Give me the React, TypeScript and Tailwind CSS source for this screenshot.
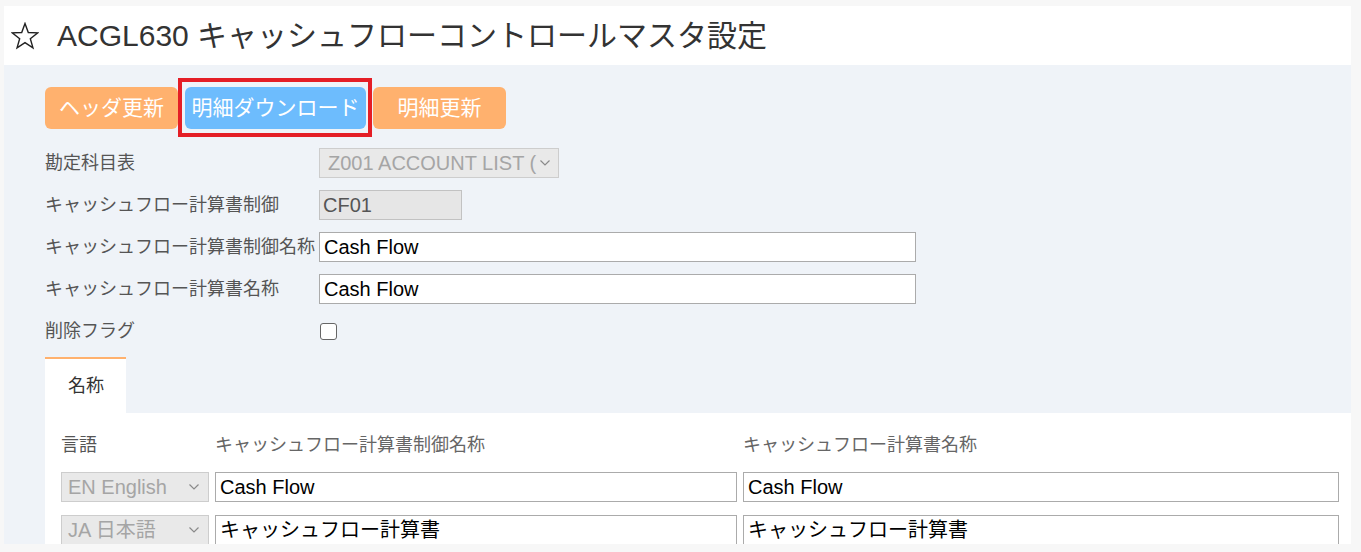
import React from "react";

const font = { fontFamily: '"Liberation Sans", "Noto Sans CJK JP", sans-serif' };

function Chevron() {
  return (
    <svg width="12" height="8" viewBox="0 0 12 8" className="shrink-0">
      <polyline points="1.5,1.5 6,6 10.5,1.5" fill="none" stroke="#8a8a8a" strokeWidth="1.2" />
    </svg>
  );
}

function Star() {
  const pts: string[] = [];
  for (let i = 0; i < 10; i++) {
    const r = i % 2 === 0 ? 13.5 : 5.6;
    const a = -Math.PI / 2 + (i * Math.PI) / 5;
    pts.push(`${(14 + r * Math.cos(a)).toFixed(2)},${(15 + r * Math.sin(a)).toFixed(2)}`);
  }
  return (
    <svg width="28" height="28" viewBox="0 0 28 28">
      <polygon points={pts.join(" ")} fill="none" stroke="#222" strokeWidth="1.4" strokeLinejoin="miter" />
    </svg>
  );
}

function Row({ label, children }: { label: string; children: React.ReactNode }) {
  return (
    <div className="flex h-[42px] items-center">
      <div className="w-[274px] shrink-0 text-[18px] text-[#555] leading-none">{label}</div>
      {children}
    </div>
  );
}

export default function App() {
  return (
    <div className="min-h-[552px] w-[1361px] bg-[#f7f7f7] pt-[6px] pl-[4px]" style={font}>
      <div className="h-[538px] w-[1347px] overflow-hidden">
        <div className="flex h-[59px] items-center bg-white pl-[7px]">
          <Star />
          <div className="ml-[18px] text-[30px] leading-none text-[#333]">
            ACGL630 キャッシュフローコントロールマスタ設定
          </div>
        </div>
        <div className="bg-[#eff3f8] pl-[41px] pt-[22px] h-[479px]">
          <div className="flex gap-[7px] h-[42px]">
            <div className="flex w-[133px] items-center justify-center rounded-[6px] bg-[#ffb16e] text-[21px] text-white">
              ヘッダ更新
            </div>
            <div className="relative w-[181px]">
              <div className="flex h-full items-center justify-center rounded-[6px] bg-[#6dbcfd] text-[21px] text-white">
                明細ダウンロード
              </div>
              <div className="absolute -left-[7px] -right-[6px] -top-[9px] -bottom-[8px] border-[4px] border-[#e41e26]" />
            </div>
            <div className="flex w-[133px] items-center justify-center rounded-[6px] bg-[#ffb16e] text-[21px] text-white">
              明細更新
            </div>
          </div>
          <div className="mt-[13px]">
            <Row label="勘定科目表">
              <div className="flex h-[30px] w-[240px] items-center justify-between overflow-hidden border border-[#cdcdcd] bg-[#e9e9e9] pl-[8px] pr-[7px]">
                <span className="whitespace-nowrap text-[20px] text-[#a5a5a5]">Z001 ACCOUNT LIST (</span>
                <Chevron />
              </div>
            </Row>
            <Row label="キャッシュフロー計算書制御">
              <div className="flex h-[30px] w-[143px] items-center border border-[#c2c2c2] bg-[#e6e6e6] pl-[3px] text-[20px] text-[#555]">
                CF01
              </div>
            </Row>
            <Row label="キャッシュフロー計算書制御名称">
              <div className="flex h-[30px] w-[597px] items-center border border-[#ababab] bg-white pl-[4px] text-[20px] text-black">
                Cash Flow
              </div>
            </Row>
            <Row label="キャッシュフロー計算書名称">
              <div className="flex h-[30px] w-[597px] items-center border border-[#ababab] bg-white pl-[4px] text-[20px] text-black">
                Cash Flow
              </div>
            </Row>
            <Row label="削除フラグ">
              <div className="ml-[1px] h-[17px] w-[17px] rounded-[3px] border-[1.5px] border-[#666] bg-white" />
            </Row>
          </div>
          <div className="mt-[5px] flex">
            <div className="flex h-[56px] w-[81px] items-center border-t-2 border-[#ffb16e] bg-white pl-[23px] text-[18px] text-[#333]">
              名称
            </div>
          </div>
          <div className="bg-white pl-[16px] pt-[20px] pb-[20px]">
            <div className="grid grid-cols-[148px_522px_596px] gap-x-[6px]">
              <div className="flex h-[24px] items-center text-[18px] text-[#555]">言語</div>
              <div className="flex h-[24px] items-center text-[18px] text-[#666]">キャッシュフロー計算書制御名称</div>
              <div className="flex h-[24px] items-center text-[18px] text-[#666]">キャッシュフロー計算書名称</div>

              <div className="mt-[15px] flex h-[30px] items-center justify-between border border-[#cdcdcd] bg-[#e9e9e9] pl-[6px] pr-[8px]">
                <span className="text-[20px] text-[#a5a5a5]">EN English</span>
                <Chevron />
              </div>
              <div className="mt-[15px] flex h-[30px] items-center border border-[#ababab] bg-white pl-[4px] text-[20px] text-black">
                Cash Flow
              </div>
              <div className="mt-[15px] flex h-[30px] items-center border border-[#ababab] bg-white pl-[4px] text-[20px] text-black">
                Cash Flow
              </div>

              <div className="mt-[13px] flex h-[30px] items-center justify-between border border-[#cdcdcd] bg-[#e9e9e9] pl-[6px] pr-[8px]">
                <span className="text-[20px] text-[#a5a5a5]">JA 日本語</span>
                <Chevron />
              </div>
              <div className="mt-[13px] flex h-[30px] items-center border border-[#ababab] bg-white pl-[4px] text-[20px] text-black">
                キャッシュフロー計算書
              </div>
              <div className="mt-[13px] flex h-[30px] items-center border border-[#ababab] bg-white pl-[4px] text-[20px] text-black">
                キャッシュフロー計算書
              </div>
            </div>
          </div>
        </div>
      </div>
    </div>
  );
}
